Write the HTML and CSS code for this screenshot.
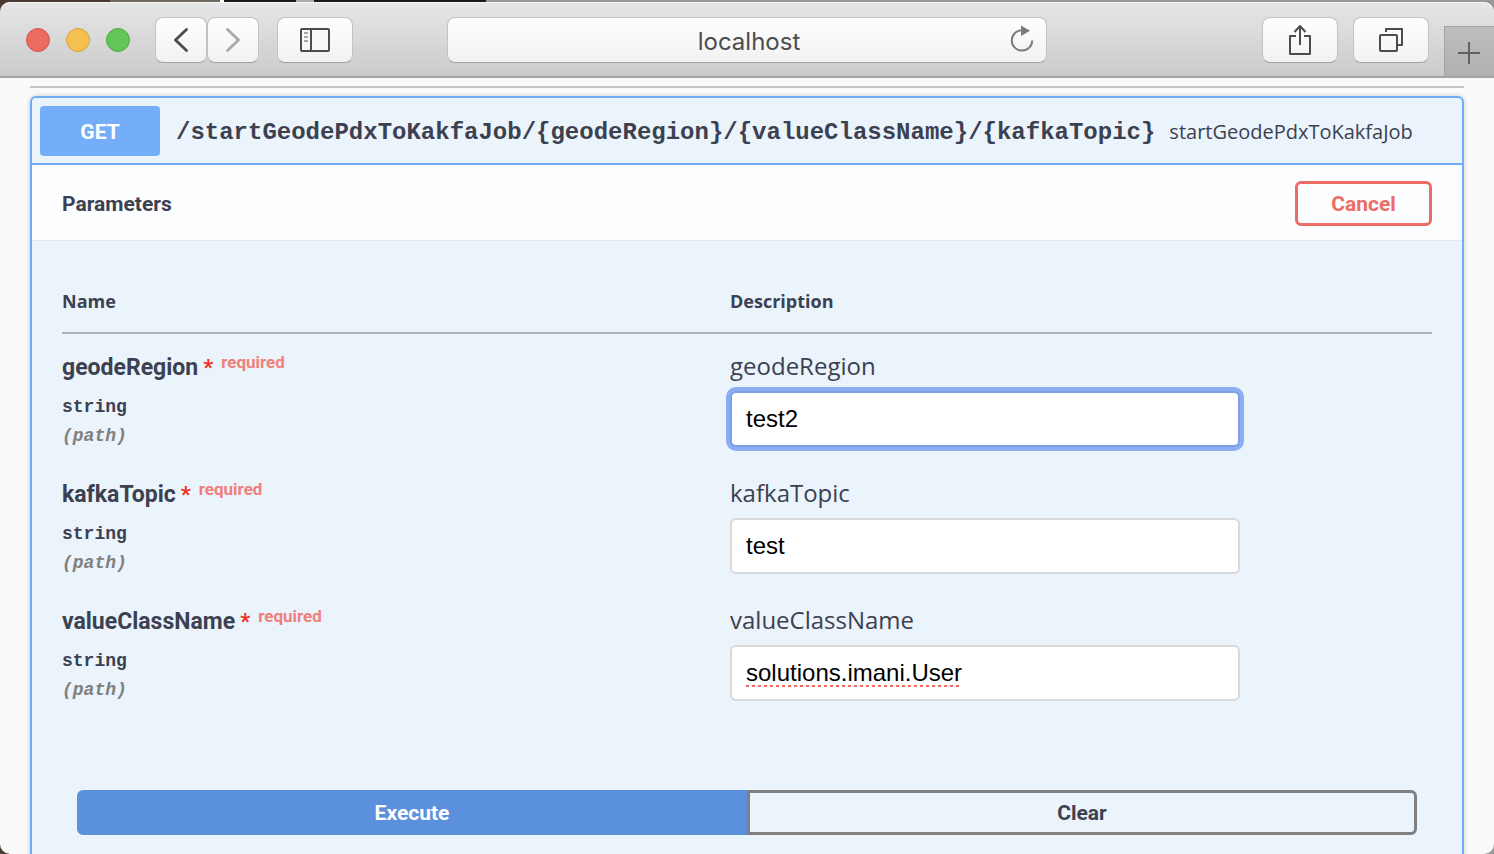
FILE: index.html
```html
<!DOCTYPE html>
<html lang="en">
<head>
<meta charset="utf-8">
<title>localhost</title>
<link rel="stylesheet" href="styles.css">
</head>
<body>
<div class="window">
  <header class="toolbar">
    <div class="tools">
      <div class="lights">
        <button class="light close" aria-label="Close"></button>
        <button class="light minimise" aria-label="Minimise"></button>
        <button class="light expand" aria-label="Zoom"></button>
      </div>
      <div class="history">
        <button class="tool narrow" aria-label="Back">
          <svg width="16" height="26" viewBox="0 0 16 26" fill="none" stroke="#4c4c4c" stroke-width="2.8" stroke-linecap="round" stroke-linejoin="round"><path d="M13.5 2.500 2.500 13l11 10.500"/></svg>
        </button>
        <button class="tool narrow" aria-label="Forward">
          <svg width="16" height="26" viewBox="0 0 16 26" fill="none" stroke="#a9a9a9" stroke-width="2.8" stroke-linecap="round" stroke-linejoin="round"><path d="M2.500 2.500 13.500 13l-11 10.500"/></svg>
        </button>
      </div>
      <button class="tool" aria-label="Sidebar">
        <svg width="30" height="24" viewBox="0 0 30 24" fill="none" stroke="#4c4c4c" stroke-width="2"><rect x="1" y="1" width="28" height="22" rx="1"/><path d="M11 1v22"/><path d="M4 5h4M4 9h4M4 13h4" stroke="#8a8a8a" stroke-width="1.6"/></svg>
      </button>
    </div>
    <div class="address">
      <input class="address-field" type="text" value="localhost" aria-label="Address">
      <button class="reload" aria-label="Reload">
        <svg width="24" height="28" viewBox="0 0 24 28"><path d="M12 5.200A10.200 10.200 0 1 0 22.200 15.400" fill="none" stroke="#7b7b7b" stroke-width="2"/><path d="M11 .5v10.500L20 5.800z" fill="#7b7b7b"/></svg>
      </button>
    </div>
    <div class="tools end">
      <button class="tool" aria-label="Share">
        <svg width="24" height="32" viewBox="0 0 24 32" fill="none" stroke="#4c4c4c" stroke-width="2" stroke-linejoin="round"><path d="M8 12H2v18h20V12h-6M12 21V2M6.500 8 12 2l5.500 6"/></svg>
      </button>
      <button class="tool" aria-label="Show tabs">
        <svg width="26" height="26" viewBox="0 0 26 26" fill="none" stroke="#4c4c4c" stroke-width="2" stroke-linejoin="round"><rect x="2" y="8" width="17" height="16" rx="1"/><path d="M8 5V2h16v16h-4"/></svg>
      </button>
      <button class="new-tab" aria-label="New tab">
        <svg width="22" height="22" viewBox="0 0 22 22" stroke="#606060" stroke-width="2"><path d="M11 0v22M0 11h22"/></svg>
      </button>
    </div>
  </header>

  <main class="page">
    <section class="operation">
      <div class="summary">
        <span class="method">GET</span>
        <span class="path">/startGeodePdxToKakfaJob/{geodeRegion}/{valueClassName}/{kafkaTopic}</span>
        <span class="description">startGeodePdxToKakfaJob</span>
      </div>
      <div class="section-header">
        <h4 class="section-title">Parameters</h4>
        <button class="cancel">Cancel</button>
      </div>
      <div class="parameters">
        <table class="table">
          <thead>
            <tr><th class="name-column">Name</th><th>Description</th></tr>
          </thead>
          <tbody>
            <tr>
              <td>
                <div class="name">geodeRegion <span class="star">*</span><span class="required">required</span></div>
                <div class="type">string</div>
                <div class="in">(path)</div>
              </td>
              <td>
                <label class="label" for="geode">geodeRegion</label>
                <input class="field focused" id="geode" type="text" value="test2">
              </td>
            </tr>
            <tr>
              <td>
                <div class="name">kafkaTopic <span class="star">*</span><span class="required">required</span></div>
                <div class="type">string</div>
                <div class="in">(path)</div>
              </td>
              <td>
                <label class="label" for="kafka">kafkaTopic</label>
                <input class="field" id="kafka" type="text" value="test">
              </td>
            </tr>
            <tr>
              <td>
                <div class="name">valueClassName <span class="star">*</span><span class="required">required</span></div>
                <div class="type">string</div>
                <div class="in">(path)</div>
              </td>
              <td>
                <label class="label" for="value">valueClassName</label>
                <input class="field misspelt" id="value" type="text" value="solutions.imani.User" spellcheck="false">
              </td>
            </tr>
          </tbody>
        </table>
      </div>
      <div class="actions">
        <button class="action execute">Execute</button>
        <button class="action clear">Clear</button>
      </div>
    </section>
  </main>
</div>
</body>
</html>
```
FILE: styles.css
```css
* { box-sizing: border-box; }

body {
  margin: 0;
  color: #3b4151;
  font-family: "Open Sans", sans-serif;
  background: linear-gradient(90deg, #4a3a33 0 110px, #6d675f 110px 220px, #fff 220px 224px, #1a1a1a 224px 296px, #aaa 296px 314px, #1a1a1a 314px 486px, #989898 486px);
}

button { margin: 0; padding: 0; font: inherit; cursor: pointer; }

.window {
  display: flex;
  flex-direction: column;
  height: 100vh;
  padding-top: 2px;
  overflow: hidden;
  border-radius: 0 0 10px 10px;
}

/* Browser toolbar */
.toolbar {
  display: grid;
  grid-template-columns: 1fr minmax(240px, 600px) 1fr;
  flex: none;
  height: 76px;
  border-bottom: 2px solid #a4a4a4;
  border-radius: 10px 10px 0 0;
  background: linear-gradient(#e6e6e6, #cbcbcb);
  box-shadow: inset 0 1px #f6f6f6;
}

.tools { display: flex; align-items: flex-start; gap: 18px; padding: 15px 0 0 26px; }
.tools.end { justify-content: flex-end; gap: 15px; padding-left: 0; }
.lights { display: flex; gap: 16px; padding: 11px 7px 0 0; }
.light { width: 24px; height: 24px; border: 1px solid; border-radius: 50%; }
.close { background: #ed6a5f; border-color: #d5564b; }
.minimise { background: #f6c050; border-color: #d9a33c; }
.expand { background: #62c656; border-color: #4fab41; }
.history { display: flex; }

.tool {
  display: flex;
  align-items: center;
  justify-content: center;
  width: 76px;
  height: 46px;
  border: 1px solid #c2c2c2;
  border-bottom-color: #a2a2a2;
  border-radius: 8px;
  background: linear-gradient(#fefefe, #f2f2f2);
}
.narrow { width: 52px; }

.address { position: relative; padding-top: 15px; }
.address-field {
  width: 100%;
  height: 46px;
  padding: 2px 0 0 4px;
  border: 1px solid #c2c2c2;
  border-bottom-color: #a2a2a2;
  border-radius: 8px;
  background: linear-gradient(#fefefe, #f2f2f2);
  color: #4c4c4c;
  font: 24px Inter, sans-serif;
  text-align: center;
}
.reload {
  position: absolute;
  top: 23px;
  right: 13px;
  width: 24px;
  height: 28px;
  border: 0;
  background: none;
}
.reload svg { display: block; }

.new-tab {
  display: flex;
  align-items: center;
  justify-content: center;
  width: 50px;
  height: 50px;
  margin-top: 9px;
  padding: 2px 2px 0 0;
  border: 0;
  border-top: 1px solid #a5a5a5;
  border-left: 1px solid #a5a5a5;
  background: linear-gradient(#bdbdbd, #b0b0b0);
}

/* Page */
.page {
  flex: 1;
  min-height: 0;
  padding: 8px 30px 0;
  overflow: hidden;
  background: #fafafa;
}
.page::before {
  content: "";
  display: block;
  height: 2px;
  margin-bottom: 8px;
  background: #c3c5c8;
}

.operation {
  border: 2px solid #72adf9;
  border-radius: 6px;
  background: #ebf3fb;
  box-shadow: 0 0 5px rgba(0, 0, 0, 0.2);
}

.summary {
  display: flex;
  align-items: center;
  padding: 8px 8px 7px;
  border-bottom: 2px solid #72adf9;
}
.method {
  width: 120px;
  margin-right: 16px;
  padding-top: 2px;
  border-radius: 4px;
  background: #74aef9;
  color: #fff;
  font: bold 21px/48px Roboto, sans-serif;
  text-align: center;
}
.path { margin-right: 14px; padding-top: 4px; font: bold 24px/32px "Liberation Mono", monospace; white-space: nowrap; }
.description { padding-top: 2px; font-size: 20px; line-height: 32px; white-space: nowrap; }

.section-header {
  display: flex;
  align-items: center;
  justify-content: space-between;
  padding: 16px 30px 14px;
  border-bottom: 1px solid #e1e7ee;
  background: #fcfdff;
}
.section-title { margin: 0; font: bold 21px/32px Roboto, sans-serif; }
.cancel {
  width: 137px;
  height: 45px;
  border: 3px solid #ed6c65;
  border-radius: 6px;
  background: transparent;
  color: #ed6c65;
  font: bold 21px Roboto, sans-serif;
}

.parameters { padding: 40px 30px 0; }
.table { width: 100%; border-collapse: collapse; table-layout: fixed; }
.table th {
  padding: 0 0 11px;
  border-bottom: 2px solid #abb1bd;
  font-size: 18px;
  line-height: 40px;
  text-align: left;
}
.name-column { width: 668px; }
.table td { padding: 16px 0 10px; vertical-align: top; }

.name { display: flex; margin-bottom: 7px; font: bold 23px/36px Roboto, sans-serif; }
.star { margin-left: 5px; color: #f0301e; font-size: 22px; line-height: 36px; }
.required { margin-left: 8px; color: #ef817c; font-size: 17px; line-height: 25px; }
.type, .in { font: bold 18px/29px "Liberation Mono", monospace; }
.in { color: #808080; font-style: italic; }

.label { display: block; margin-bottom: 10px; font-size: 24px; line-height: 31px; }
.field {
  display: block;
  width: 510px;
  max-width: 100%;
  height: 56px;
  padding: 0 14px;
  border: 2px solid #d9d9d9;
  border-radius: 6px;
  background: #fff;
  color: #000;
  font: 24px "Liberation Sans", sans-serif;
}
.focused { border-color: #7f9fe2; box-shadow: 0 0 0 4px #8badf3; }
.misspelt { text-decoration: underline dotted #f7685f 3px; text-underline-offset: 4px; }

.actions { display: flex; padding: 75px 45px 40px; }
.action {
  flex: 1;
  height: 45px;
  border: 3px solid #5b90dc;
  border-radius: 6px 0 0 6px;
  background: #5b90dc;
  color: #fff;
  font: bold 21px Roboto, sans-serif;
}
.clear {
  border-color: #808080;
  border-radius: 0 6px 6px 0;
  background: transparent;
  color: #3b4151;
}
```
